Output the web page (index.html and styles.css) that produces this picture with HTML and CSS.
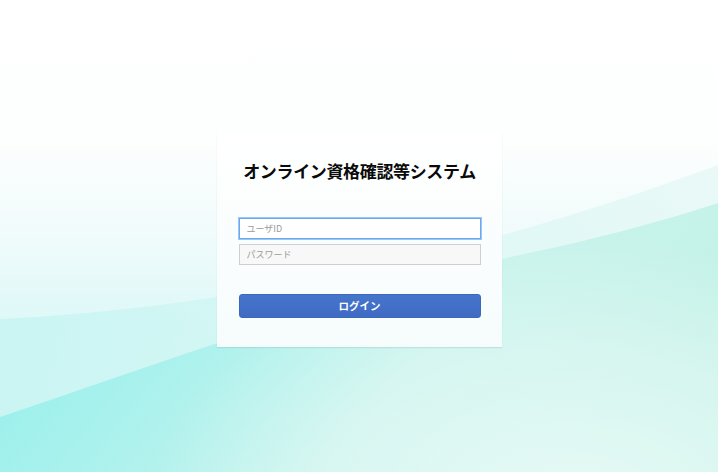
FILE: index.html
```html
<!DOCTYPE html>
<html lang="ja">
<head>
<meta charset="utf-8">
<title>オンライン資格確認等システム</title>
<link rel="stylesheet" href="styles.css">
</head>
<body>
<svg class="bg" viewBox="0 0 718 472" preserveAspectRatio="none" aria-hidden="true">
  <defs>
    <linearGradient id="base" x1="0" y1="0" x2="0" y2="1">
      <stop offset="0" stop-color="#ffffff"/>
      <stop offset="0.3" stop-color="#fdfefe"/>
      <stop offset="0.5" stop-color="#f0fbfb"/>
      <stop offset="0.68" stop-color="#def8f8"/>
      <stop offset="1" stop-color="#e4f8f5"/>
    </linearGradient>
    <linearGradient id="bandA" x1="0" y1="0" x2="1" y2="0">
      <stop offset="0" stop-color="#c4f4f2"/>
      <stop offset="0.5" stop-color="#d6f7f4"/>
      <stop offset="1" stop-color="#e6f8f5"/>
    </linearGradient>
    <linearGradient id="bandB" x1="0" y1="0" x2="1" y2="0.3">
      <stop offset="0" stop-color="#8eefec"/>
      <stop offset="0.35" stop-color="#a8f1ed"/>
      <stop offset="0.7" stop-color="#c8f3ec"/>
      <stop offset="1" stop-color="#c4f2e8"/>
    </linearGradient>
    <radialGradient id="glow" cx="0.8" cy="1.1" r="0.6">
      <stop offset="0" stop-color="#ffffff" stop-opacity="0.6"/>
      <stop offset="0.6" stop-color="#ffffff" stop-opacity="0.3"/>
      <stop offset="1" stop-color="#ffffff" stop-opacity="0"/>
    </radialGradient>
  </defs>
  <rect width="718" height="472" fill="url(#base)"/>
  <path d="M0,319 C180,310 420,275 718,165 L718,472 L0,472 Z" fill="url(#bandA)" opacity="0.8"/>
  <path d="M0,417 C170,360 360,290 520,255 C600,238 660,222 718,203 L718,472 L0,472 Z" fill="url(#bandB)"/>
  <rect width="718" height="472" fill="url(#glow)"/>
</svg>

<main class="page">
  <form class="card">
    <h1 class="title">オンライン資格確認等システム</h1>
    <div class="fields">
      <input class="field field-focus" type="text" placeholder="ユーザID" autofocus>
      <input class="field" type="password" placeholder="パスワード">
    </div>
    <button class="login" type="button">ログイン</button>
  </form>
</main>
</body>
</html>
```

FILE: styles.css
```css
html, body {
  margin: 0;
  padding: 0;
  width: 718px;
  height: 472px;
  overflow: hidden;
}

body {
  position: relative;
  font-family: "Noto Sans CJK JP", "Noto Sans", sans-serif;
  color: #111;
}

.bg {
  position: absolute;
  left: 0;
  top: 0;
  width: 718px;
  height: 472px;
  display: block;
}

.page {
  position: relative;
  display: flex;
  justify-content: center;
  padding-top: 134px;
}

.card {
  width: 285px;
  box-sizing: border-box;
  padding: 24px 21px 29px 22px;
  background: linear-gradient(#ffffff, #f6fcfc);
  box-shadow: 0 1px 1px rgba(120, 170, 170, 0.25);
  display: flex;
  flex-direction: column;
}

.title {
  margin: 0;
  font-size: 17px;
  line-height: 26px;
  font-weight: 700;
  text-align: center;
  color: #0a0a0a;
  letter-spacing: -0.35px;
  white-space: nowrap;
}

.fields {
  display: flex;
  flex-direction: column;
  gap: 5px;
  margin-top: 34px;
}

.field {
  box-sizing: border-box;
  width: 242px;
  height: 21px;
  margin: 0;
  padding: 0 7px;
  border: 1px solid #cfcfcf;
  background: #f8f8f8;
  font-family: "Noto Sans CJK JP", sans-serif;
  font-size: 9px;
  color: #333;
  outline: none;
  border-radius: 0;
}

.field::placeholder {
  color: #9a9a9a;
}

.field-focus {
  background: #ffffff;
  border-color: #6aa8f0;
  box-shadow: 0 0 0 1px #9cc6f5;
}

.login {
  margin-top: 29px;
  width: 242px;
  height: 24px;
  border: 1px solid #3d66bd;
  border-radius: 3px;
  background: linear-gradient(#4675cc, #3f6ac3);
  color: #ffffff;
  font-family: "Noto Sans CJK JP", sans-serif;
  font-size: 10.5px;
  font-weight: 700;
  padding: 0;
  line-height: 22px;
}
```
